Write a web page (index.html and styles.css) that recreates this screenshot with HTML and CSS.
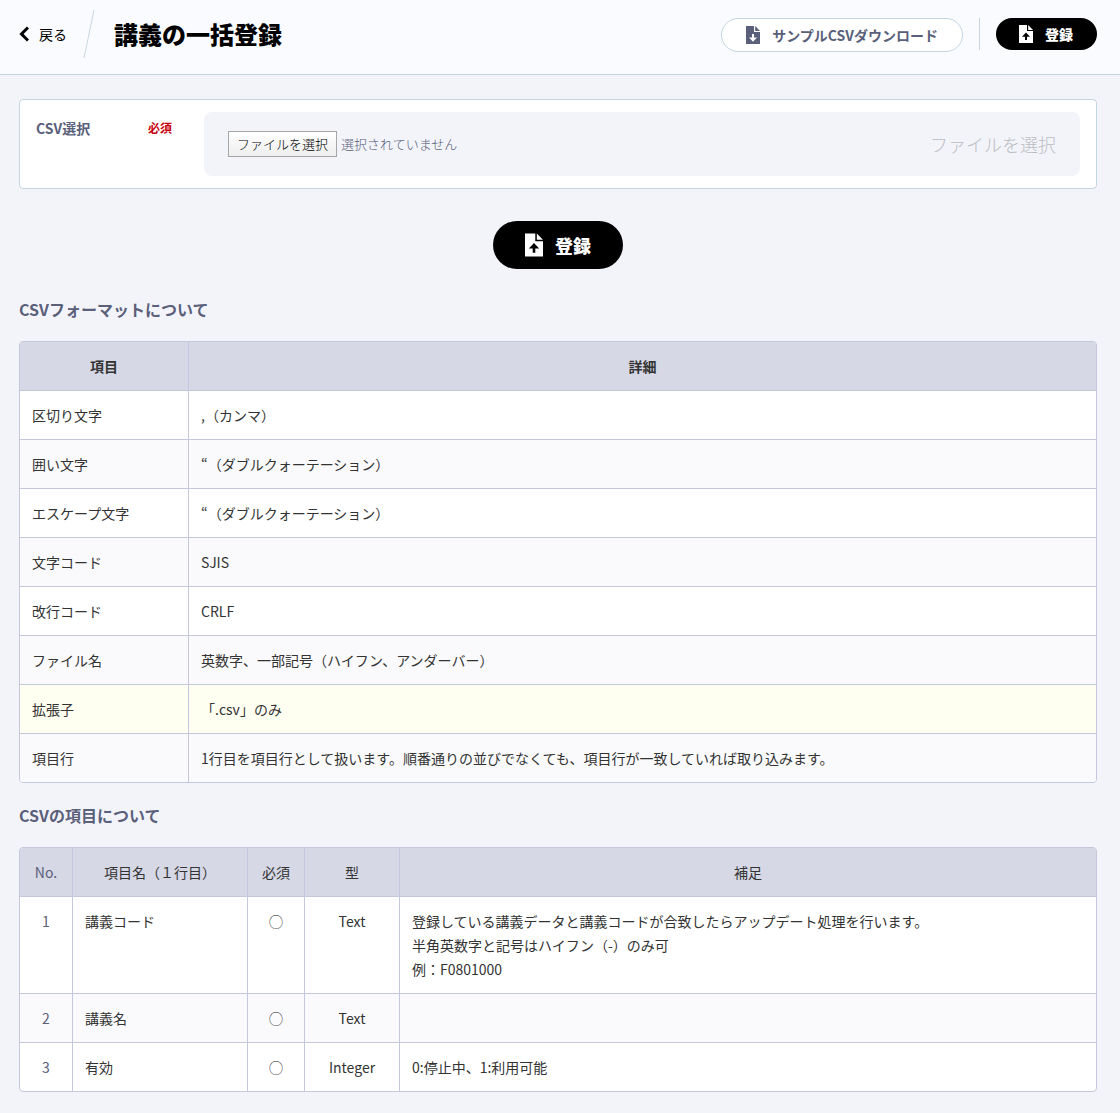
FILE: index.html
```html
<!DOCTYPE html>
<html lang="ja">
<head>
<meta charset="utf-8">
<meta name="viewport" content="width=device-width, initial-scale=1">
<title>講義の一括登録</title>
<link rel="stylesheet" href="styles.css">
</head>
<body>
<svg class="sprite" aria-hidden="true">
  <symbol id="file-up" viewBox="0 0 14 18">
    <path fill-rule="evenodd" d="M0 0H8V6H14V18H0ZM7 7.5L3 11.7H6V15H8V11.7H11Z"/>
    <path d="M9.2 0L14 4.9H9.2Z"/>
  </symbol>
  <symbol id="file-down" viewBox="0 0 14 18">
    <path fill-rule="evenodd" d="M0 0H8V6H14V18H0ZM6 8V11.5H3L7 15.7L11 11.5H8V8Z"/>
    <path d="M9.2 0L14 4.9H9.2Z"/>
  </symbol>
</svg>

<header class="page-header">
  <a class="back" href="#">
    <svg class="back-icon" viewBox="0 0 10 16" aria-hidden="true"><path d="M9 1.5L2.5 8L9 14.5"/></svg>
    戻る
  </a>
  <svg class="slash" viewBox="0 0 12 48" aria-hidden="true"><path d="M11 0L1 48"/></svg>
  <h1 class="page-title">講義の一括登録</h1>
  <div class="actions">
    <button class="button button-outline" type="button">
      <svg class="icon" aria-hidden="true"><use href="#file-down"/></svg>サンプルCSVダウンロード
    </button>
    <span class="divider"></span>
    <button class="button button-dark" type="submit" form="upload">
      <svg class="icon" aria-hidden="true"><use href="#file-up"/></svg>登録
    </button>
  </div>
</header>

<main class="content">
  <form id="upload" class="upload">
    <div class="card">
      <div class="field-label">
        <label for="csv">CSV選択</label>
        <span class="required">必須</span>
      </div>
      <div class="dropzone">
        <input class="file-input" type="file" id="csv" accept=".csv">
        <label class="file-button" for="csv">ファイルを選択</label>
        <span class="file-name">選択されていません</span>
        <span class="file-hint">ファイルを選択</span>
      </div>
    </div>
    <button class="button button-dark button-large" type="submit">
      <svg class="icon" aria-hidden="true"><use href="#file-up"/></svg>登録
    </button>
  </form>

  <h2 class="section-title">CSVフォーマットについて</h2>
  <table class="table table-format">
    <colgroup><col class="col-item"><col></colgroup>
    <thead>
      <tr><th scope="col">項目</th><th scope="col">詳細</th></tr>
    </thead>
    <tbody>
      <tr><td>区切り文字</td><td>,（カンマ）</td></tr>
      <tr><td>囲い文字</td><td>“（ダブルクォーテーション）</td></tr>
      <tr><td>エスケープ文字</td><td>“（ダブルクォーテーション）</td></tr>
      <tr><td>文字コード</td><td>SJIS</td></tr>
      <tr><td>改行コード</td><td>CRLF</td></tr>
      <tr><td>ファイル名</td><td>英数字、一部記号（ハイフン、アンダーバー）</td></tr>
      <tr class="highlight"><td>拡張子</td><td>「.csv」のみ</td></tr>
      <tr><td>項目行</td><td>1行目を項目行として扱います。順番通りの並びでなくても、項目行が一致していれば取り込みます。</td></tr>
    </tbody>
  </table>

  <h2 class="section-title">CSVの項目について</h2>
  <table class="table table-columns">
    <colgroup><col class="col-no"><col class="col-name"><col class="col-required"><col class="col-type"><col></colgroup>
    <thead>
      <tr>
        <th class="number" scope="col">No.</th><th scope="col">項目名（１行目）</th><th scope="col">必須</th><th scope="col">型</th><th scope="col">補足</th>
      </tr>
    </thead>
    <tbody>
      <tr><td class="number">1</td><td>講義コード</td><td class="center">◯</td><td class="center">Text</td><td>登録している講義データと講義コードが合致したらアップデート処理を行います。<br>半角英数字と記号はハイフン（-）のみ可<br>例：F0801000</td></tr>
      <tr><td class="number">2</td><td>講義名</td><td class="center">◯</td><td class="center">Text</td><td></td></tr>
      <tr><td class="number">3</td><td>有効</td><td class="center">◯</td><td class="center">Integer</td><td>0:停止中、1:利用可能</td></tr>
    </tbody>
  </table>
</main>
</body>
</html>
```
FILE: styles.css
```css
* {
  box-sizing: border-box;
}

body {
  margin: 0;
  background: #f3f4fa;
  color: #333;
  font-family: "Noto Sans CJK JP", sans-serif;
  font-size: 14px;
  line-height: 24px;
  text-spacing-trim: space-all;
}

.sprite {
  display: none;
}

.page-header {
  display: flex;
  align-items: flex-start;
  padding: 10px 23px 16px 19px;
  border-bottom: 1px solid #c5d5e2;
  background: #f9fbff;
}

.back {
  display: flex;
  align-items: center;
  gap: 10px;
  height: 48px;
  color: #000;
  text-decoration: none;
}

.back-icon {
  width: 10px;
  height: 16px;
  fill: none;
  stroke: #000;
  stroke-width: 3;
}

.slash {
  width: 12px;
  height: 48px;
  margin: 0 19px 0 16px;
  fill: none;
  stroke: #c9d6e0;
}

.page-title {
  margin: 0;
  color: #000;
  font-size: 24px;
  font-weight: 900;
  line-height: 48px;
}

.actions {
  display: flex;
  align-items: flex-start;
  gap: 16px;
  margin: 8px 0 0 auto;
}

.divider {
  width: 1px;
  height: 32px;
  background: #c5d5e2;
}

.button {
  display: flex;
  align-items: center;
  justify-content: center;
  border: 0;
  border-radius: 24px;
  font: inherit;
  font-weight: 700;
  white-space: nowrap;
  cursor: pointer;
}

.button-outline {
  gap: 12px;
  height: 34px;
  padding: 0 24px;
  border: 1px solid #c5d5e2;
  background: #fff;
  color: #5a5f7a;
}

.button-dark {
  gap: 12px;
  height: 32px;
  padding: 0 24px 0 23px;
  background: #000;
  color: #fff;
  font-weight: 900;
}

.button-large {
  height: 48px;
  padding: 0 32px;
  font-size: 18px;
}

.icon {
  width: 14px;
  height: 18px;
  fill: currentColor;
}

.button-large .icon {
  width: 18px;
  height: 24px;
}

.content {
  padding: 24px 23px 21px 19px;
}

.upload {
  display: flex;
  flex-direction: column;
  align-items: center;
  gap: 32px;
  padding-bottom: 8px;
}

.card {
  display: flex;
  width: 100%;
  padding: 12px 16px;
  border: 1px solid #c5d5e2;
  border-radius: 4px;
  background: #fff;
}

.field-label {
  display: flex;
  justify-content: space-between;
  flex: 0 0 168px;
  padding-right: 32px;
  color: #5a5f7a;
  font-weight: 700;
  line-height: 32px;
}

.required {
  color: #c7000b;
  font-size: 12px;
}

.dropzone {
  position: relative;
  display: flex;
  flex: 1;
  align-items: center;
  gap: 4px;
  height: 64px;
  padding: 0 24px;
  border-radius: 8px;
  background: #f3f4fa;
  color: #5a5f7a;
  font-size: 13px;
  font-weight: 300;
}

.file-input {
  position: absolute;
  inset: 0;
  width: 100%;
  height: 100%;
  opacity: 0;
  cursor: pointer;
}

.file-button {
  padding: 0 8px;
  border: 1px solid #a6a6a6;
  background: linear-gradient(#fff, #eee);
  color: #000;
}

.file-hint {
  margin-left: auto;
  color: #bcbdc3;
  font-size: 18px;
}

.section-title {
  margin: 20px 0;
  color: #5a5f7a;
  font-size: 16px;
  font-weight: 700;
  line-height: 24px;
}

.table {
  width: 100%;
  border: 1px solid #c5c7dc;
  border-radius: 4px;
  border-spacing: 0;
  overflow: hidden;
  table-layout: fixed;
  background: #fff;
}

.table th,
.table td {
  height: 48px;
  padding: 12px;
  border-right: 1px solid #c5c7dc;
  border-bottom: 1px solid #c5c7dc;
  text-align: left;
  vertical-align: top;
}

.table th:last-child,
.table td:last-child {
  border-right: 0;
}

.table tbody tr:last-child td {
  border-bottom: 0;
}

.table th {
  background: #d6d8e5;
  text-align: center;
}

.table tbody tr:nth-child(even) {
  background: #fafafc;
}

.table tbody .highlight {
  background: #fefff0;
}

.table-columns th {
  padding: 12px 0;
  font-weight: 400;
}

.col-item {
  width: 169px;
}

.col-no {
  width: 53px;
}

.col-name {
  width: 175px;
}

.col-required {
  width: 57px;
}

.col-type {
  width: 95px;
}

.table .center,
.table .number {
  text-align: center;
}

.table .number {
  color: #5a5f7a;
}
```
